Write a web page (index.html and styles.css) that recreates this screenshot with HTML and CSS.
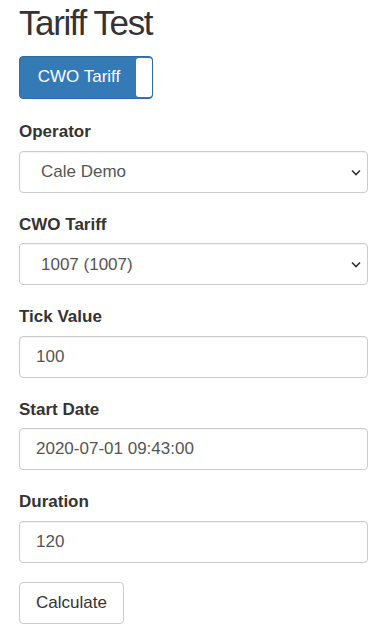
FILE: index.html
```html
<!DOCTYPE html>
<html>
<head>
<meta charset="utf-8">
<title>Tariff Test</title>
<link rel="stylesheet" href="styles.css">
</head>
<body>
<div class="container">
  <h1 class="title">Tariff Test</h1>
  <div class="toggle">
    <span class="toggle-label">CWO Tariff</span>
    <span class="toggle-handle"></span>
  </div>
  <form class="form">
    <div class="group">
      <label class="label">Operator</label>
      <div class="select-wrap">
        <select class="control select"><option>Cale Demo</option></select>
        <svg class="chevron" width="10" height="7" viewBox="0 0 10 7"><path d="M1 1.5 L5 5.5 L9 1.5" fill="none" stroke="#333" stroke-width="1.6"/></svg>
      </div>
    </div>
    <div class="group">
      <label class="label">CWO Tariff</label>
      <div class="select-wrap">
        <select class="control select"><option>1007 (1007)</option></select>
        <svg class="chevron" width="10" height="7" viewBox="0 0 10 7"><path d="M1 1.5 L5 5.5 L9 1.5" fill="none" stroke="#333" stroke-width="1.6"/></svg>
      </div>
    </div>
    <div class="group">
      <label class="label">Tick Value</label>
      <input class="control" type="text" value="100">
    </div>
    <div class="group">
      <label class="label">Start Date</label>
      <input class="control" type="text" value="2020-07-01 09:43:00">
    </div>
    <div class="group">
      <label class="label">Duration</label>
      <input class="control" type="text" value="120">
    </div>
    <button class="btn" type="button">Calculate</button>
  </form>
</div>
</body>
</html>
```
FILE: styles.css
```css
* { box-sizing: border-box; }
html, body {
  margin: 0;
  padding: 0;
  background: #fff;
}
body {
  font-family: "Liberation Sans", Arial, sans-serif;
  font-size: 17px;
  color: #333;
}
.container {
  padding: 0 22px 0 19px;
}
.title {
  margin: 3.4px 0 0;
  font-size: 35px;
  line-height: 40px;
  font-weight: 400;
  letter-spacing: -1.4px;
  color: #333;
}
.toggle {
  margin-top: 12.6px;
  display: flex;
  width: 134px;
  height: 43px;
  background: #337ab7;
  border: 1px solid #2e6da4;
  border-radius: 4px;
  overflow: hidden;
}
.toggle-label {
  flex: 1;
  display: flex;
  align-items: center;
  justify-content: center;
  color: #fff;
  font-size: 17px;
  padding-left: 2px;
}
.toggle-handle {
  width: 16px;
  background: #fff;
  border-radius: 3px;
  margin: 1px 0;
}
.form {
  margin-top: 22.5px;
  display: flex;
  flex-direction: column;
  gap: 21px;
}
.group {
  display: flex;
  flex-direction: column;
}
.label {
  display: block;
  font-weight: 700;
  font-size: 17px;
  line-height: 22px;
  margin-bottom: 7.5px;
  color: #333;
}
.select-wrap {
  position: relative;
}
.control {
  display: block;
  width: 100%;
  height: 42px;
  padding: 0 16px;
  border: 1px solid #ccc;
  border-radius: 4px;
  background: #fff;
  font-family: "Liberation Sans", Arial, sans-serif;
  font-size: 17px;
  color: #555;
  box-shadow: inset 0 1px 1px rgba(0,0,0,0.05);
  outline: none;
}
.select {
  appearance: none;
  -webkit-appearance: none;
  padding-left: 21px;
  padding-right: 30px;
}
.chevron {
  position: absolute;
  right: 7px;
  top: 18px;
  pointer-events: none;
}
.btn {
  align-self: flex-start;
  margin-top: -2px;
  height: 42px;
  padding: 0 16px;
  border: 1px solid #ccc;
  border-radius: 4px;
  background: #fff;
  font-family: "Liberation Sans", Arial, sans-serif;
  font-size: 17px;
  color: #333;
}
```
